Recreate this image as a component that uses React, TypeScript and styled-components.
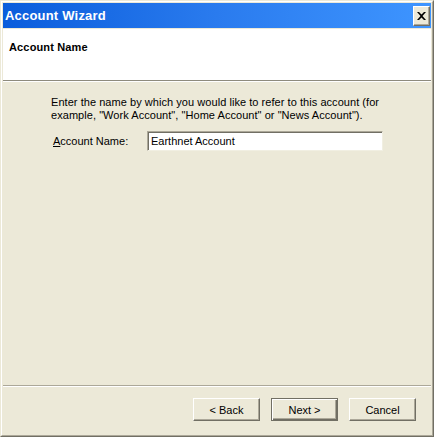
import React from "react";
import styled, { createGlobalStyle } from "styled-components";

const Global = createGlobalStyle`
  html, body { margin: 0; padding: 0; background: #ECE9D8; }
  body { font-family: "Liberation Sans", Arial, sans-serif; font-size: 11px; }
`;

const Frame = styled.div`
  width: 434px;
  height: 437px;
  box-sizing: border-box;
  border-top: 1px solid #ECE9D8;
  border-left: 1px solid #ECE9D8;
  border-right: 1px solid #716F64;
  border-bottom: 1px solid #716F64;
  display: flex;
`;

const InnerFrame = styled.div`
  flex: 1;
  display: flex;
  flex-direction: column;
  border-top: 1px solid #FFFFFF;
  border-left: 1px solid #FFFFFF;
  border-right: 1px solid #ACA899;
  border-bottom: 1px solid #ACA899;
  padding: 1px;
  background: #ECE9D8;
`;

const TitleBar = styled.div`
  height: 25px;
  flex: none;
  display: flex;
  align-items: center;
  justify-content: space-between;
  padding: 0 1px 0 2px;
  background: linear-gradient(to right, #0A5DDC 0%, #2A7BEE 50%, #3E95FF 100%);
  margin-bottom: 1px;
`;

const TitleText = styled.span`
  color: #FFFFFF;
  font-weight: bold;
  font-size: 13px;
  letter-spacing: 0.2px;
`;

const CloseButton = styled.div`
  width: 17px;
  height: 20px;
  box-sizing: border-box;
  background: #ECE9D8;
  border-top: 1px solid #FFFFFF;
  border-left: 1px solid #FFFFFF;
  border-right: 1px solid #716F64;
  border-bottom: 1px solid #716F64;
  box-shadow: inset -1px -1px 0 #ACA899;
  display: flex;
  align-items: center;
  justify-content: center;
`;

const Header = styled.div`
  height: 52px;
  flex: none;
  box-sizing: border-box;
  background: #FFFFFF;
  border-bottom: 1px solid #8E8B7E;
  padding: 12px 0 0 6px;
`;

const HeaderTitle = styled.div`
  font-weight: bold;
  font-size: 11px;
  color: #000;
  letter-spacing: 0.15px;
`;

const Body = styled.div`
  flex: 1;
  border-top: 1px solid #FFFFFF;
  padding: 14px 0 0 48px;
  color: #000;
`;

const Intro = styled.p`
  margin: 0;
  line-height: 13px;
  width: 345px;
  letter-spacing: 0.05px;
`;

const FieldRow = styled.div`
  display: flex;
  align-items: center;
  margin-top: 9px;
  padding-left: 2px;
`;

const Label = styled.label`
  width: 94px;
`;

const TextInput = styled.div`
  width: 236px;
  height: 20px;
  box-sizing: border-box;
  background: #FFFFFF;
  border-top: 1px solid #ACA899;
  border-left: 1px solid #ACA899;
  border-right: 1px solid #F1EFE2;
  border-bottom: 1px solid #F1EFE2;
  box-shadow: inset 1px 1px 0 #716F64, inset -1px -1px 0 #FFFFFF;
  padding: 3px 0 0 3px;
  line-height: 13px;
`;

const Footer = styled.div`
  flex: none;
  height: 49px;
  box-sizing: border-box;
  border-top: 1px solid #ACA899;
  box-shadow: inset 0 1px 0 #FFFFFF;
  display: flex;
  justify-content: flex-end;
  align-items: flex-start;
  gap: 11px;
  padding: 12px 15px 0 0;
`;

const Button = styled.div<{ $default?: boolean }>`
  width: 67px;
  height: 23px;
  box-sizing: border-box;
  display: flex;
  align-items: center;
  justify-content: center;
  background: #ECE9D8;
  border: 1px solid ${(p) => (p.$default ? "#716F64" : "transparent")};
  box-shadow: ${(p) =>
    p.$default
      ? "inset 1px 1px 0 #FFFFFF, inset -1px -1px 0 #716F64, inset -2px -2px 0 #ACA899"
      : "inset 1px 1px 0 #FFFFFF, inset -1px -1px 0 #716F64, inset -2px -2px 0 #ACA899"};
  ${(p) =>
    p.$default
      ? ""
      : "border-top-color: #FFFFFF; border-left-color: #FFFFFF; border-right-color: #716F64; border-bottom-color: #716F64; box-shadow: inset -1px -1px 0 #ACA899;"}
  color: #000;
`;

export default function App() {
  return (
    <>
      <Global />
      <Frame>
        <InnerFrame>
          <TitleBar>
            <TitleText>Account Wizard</TitleText>
            <CloseButton>
              <svg width="9" height="8" viewBox="0 0 9 8">
                <path
                  d="M0 0h2l2.5 2.5L7 0h2L5.5 4 9 8H7L4.5 5.5 2 8H0l3.5-4z"
                  fill="#000"
                />
              </svg>
            </CloseButton>
          </TitleBar>
          <Header>
            <HeaderTitle>Account Name</HeaderTitle>
          </Header>
          <Body>
            <Intro>
              Enter the name by which you would like to refer to this account (for
              example, "Work Account", "Home Account" or "News Account").
            </Intro>
            <FieldRow>
              <Label>
                <u>A</u>ccount Name:
              </Label>
              <TextInput>Earthnet Account</TextInput>
            </FieldRow>
          </Body>
          <Footer>
            <Button>&lt; Back</Button>
            <Button $default>Next &gt;</Button>
            <Button>Cancel</Button>
          </Footer>
        </InnerFrame>
      </Frame>
    </>
  );
}
